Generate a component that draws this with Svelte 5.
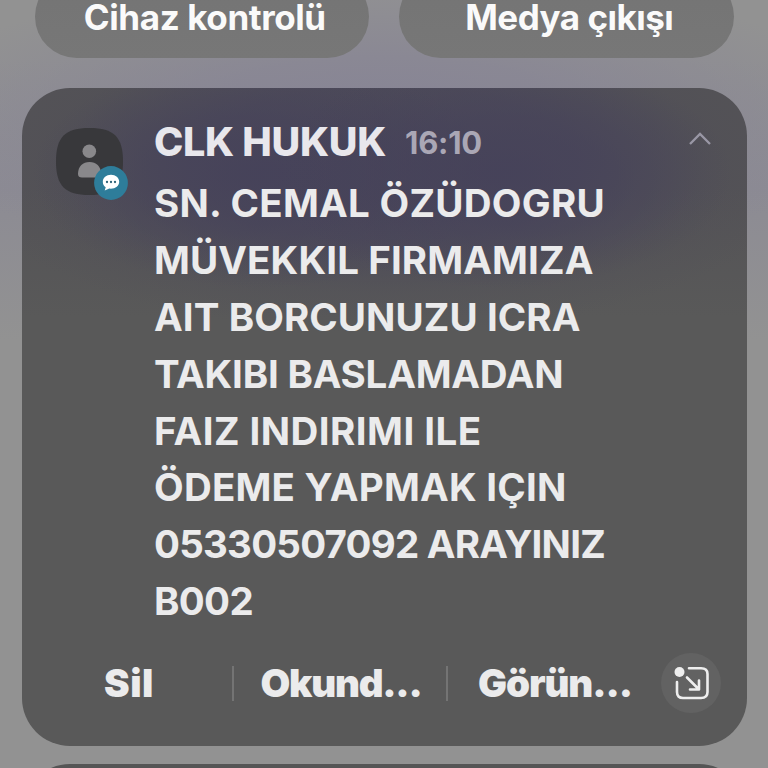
<script>
  const controls = [
    { text: 'Cihaz kontrolü', width: 242 },
    { text: 'Medya çıkışı', width: 208 }
  ];

  const lines = [
    { text: 'SN. CEMAL ÖZÜDOGRU', width: 451 },
    { text: 'MÜVEKKIL FIRMAMIZA', width: 439.5 },
    { text: 'AIT BORCUNUZU ICRA', width: 426.5 },
    { text: 'TAKIBI BASLAMADAN', width: 409.5 },
    { text: 'FAIZ INDIRIMI ILE', width: 327.5 },
    { text: 'ÖDEME YAPMAK IÇIN', width: 412.5 },
    { text: '05330507092 ARAYINIZ', width: 451 },
    { text: 'B002', width: 99 }
  ];

  // Spreads letter spacing so that a label takes up the given width.
  function fit(node, width) {
    const natural = node.getBoundingClientRect().width;
    node.style.letterSpacing = `${(width - natural) / node.textContent.length}px`;
  }
</script>

<div class="shade">
  <div class="controls">
    {#each controls as c}
      <button class="control"><span use:fit={c.width}>{c.text}</span></button>
    {/each}
  </div>

  <article class="card">
    <div class="top">
      <div class="avatar">
        <svg width="67" height="67" viewBox="0 0 67 67">
          <path d="M33.5 0C58 0 67 9 67 33.5S58 67 33.5 67 0 58 0 33.5 9 0 33.5 0Z" fill="#38383b" />
          <circle cx="33.3" cy="23.3" r="6.8" fill="#89888b" />
          <path d="M22 46C22 38 27 34 33.500 34S45 38 45 46C45 48.500 43.500 49.500 41 49.500H26C23.500 49.500 22 48.500 22 46Z" fill="#89888b" />
        </svg>
        <svg class="badge" width="34" height="34" viewBox="0 0 34 34">
          <circle cx="17" cy="17" r="16.900" fill="#2e7d9a" />
          <path d="M17 8.800C12.300 8.800 8.800 11.700 8.800 15.700C8.800 18 9.900 20 11.700 21.200L10.700 24.500L15.300 22.600C21 23.200 25.200 20 25.200 15.700C25.200 11.700 21.700 8.800 17 8.800Z" fill="#fff" />
          <circle cx="13" cy="16" r="1.150" fill="#2e6479" />
          <circle cx="17" cy="16" r="1.150" fill="#2e6479" />
          <circle cx="21" cy="16" r="1.150" fill="#2e6479" />
        </svg>
      </div>
      <div class="content">
        <header>
          <span class="sender" use:fit={232}>CLK HUKUK</span>
          <span class="time" use:fit={77}>16:10</span>
          <svg class="chevron" width="24" height="16" viewBox="0 0 24 16">
            <path d="M2 13L12 3L22 13" fill="none" stroke="#9997a5" stroke-width="2.300" />
          </svg>
        </header>
        <div class="message">
          {#each lines as l}
            <div class="line"><span use:fit={l.width}>{l.text}</span></div>
          {/each}
        </div>
      </div>
    </div>

    <footer>
      <button class="action first"><span use:fit={50}>Sil</span></button>
      <i></i>
      <button class="action second"><span use:fit={161}>Okund...</span></button>
      <i></i>
      <button class="action third"><span use:fit={154}>Görün...</span></button>
      <button class="popup" aria-label="Pop-up">
        <svg width="36" height="36" viewBox="0 0 36 36" fill="none" stroke="#eee" stroke-width="2.600" stroke-linecap="round" stroke-linejoin="round">
          <circle cx="6.500" cy="7" r="5" fill="#eee" stroke="none" />
          <path d="M16 3.300H28C32.500 3.300 34.500 5.300 34.500 9V27C34.500 31 32.500 33 28 33H10C6 33 4 31 4 27V17" />
          <path d="M14 12.500L25.500 24M26 15.500V24.500H17" />
        </svg>
      </button>
    </footer>
  </article>

  <div class="next"></div>
</div>

<style>
  :global(body) { margin: 0; }
  .shade {
    width: 768px;
    height: 768px;
    overflow: hidden;
    display: flex;
    flex-direction: column;
    font-family: Inter, 'Noto Sans', sans-serif;
    background:
      radial-gradient(ellipse 500px 145px at 384px 120px, rgba(133, 130, 150, 0.85) 0%, rgba(134, 131, 149, 0.7) 40%, rgba(145, 145, 146, 0) 100%),
      linear-gradient(180deg, rgba(136, 134, 148, 0) 60px, rgba(136, 134, 148, 0.6) 190px, rgba(136, 134, 148, 0) 340px),
      #929292;
  }
  button { border: 0; padding: 0; margin: 0; font: inherit; color: inherit; background: none; }
  span { white-space: nowrap; }
  .controls {
    flex: none;
    height: 58px;
    box-sizing: border-box;
    padding: 0 34.500px;
    display: flex;
    gap: 30px;
    align-items: flex-end;
    justify-content: center;
  }
  .control {
    flex: 1 1 0;
    min-width: 0;
    box-sizing: border-box;
    height: 83px;
    border-radius: 42px;
    background: linear-gradient(180deg, #747474, #777777);
    color: #fafafa;
    font-size: 35px;
    line-height: 36px;
    font-weight: 700;
    padding-left: 6px;
  }
  .control:last-child { padding-left: 6px; }
  .card {
    flex: none;
    width: 725px;
    height: 658px;
    box-sizing: border-box;
    margin: 30px 0 0 22px;
    padding-top: 25px;
    border-radius: 48px;
    display: flex;
    flex-direction: column;
    justify-content: space-between;
    color: #ebebec;
    background:
      radial-gradient(ellipse 230px 115px at 480px 85px, rgba(68, 64, 90, 0.75) 0%, rgba(69, 65, 90, 0.55) 45%, rgba(80, 78, 88, 0) 100%),
      radial-gradient(ellipse 230px 115px at 240px 85px, rgba(68, 64, 90, 0.75) 0%, rgba(69, 65, 90, 0.55) 45%, rgba(80, 78, 88, 0) 100%),
      radial-gradient(ellipse 430px 170px at 362px 75px, rgba(72, 69, 90, 0.75) 0%, rgba(73, 70, 90, 0.65) 45%, rgba(78, 76, 88, 0.3) 75%, rgba(86, 86, 88, 0) 100%),
      linear-gradient(180deg, #545356 0, #545356 100px, #595959 230px);
  }
  .top { display: flex; padding-left: 34px; }
  .avatar { position: relative; width: 67px; height: 67px; margin-top: 15px; flex: none; }
  .avatar svg { display: block; }
  .avatar .badge { position: absolute; left: 38px; top: 38px; }
  .content { flex: 1; padding-left: 31px; }
  header { display: flex; align-items: baseline; height: 62px; line-height: 58px; }
  .sender { font-size: 39.500px; font-weight: 800; color: #e8e7ec; }
  .time { margin-left: 19px; font-size: 31px; font-weight: 650; color: #aaa7b5; position: relative; top: -2.500px; }
  .chevron { margin-left: auto; margin-right: 35px; align-self: flex-start; margin-top: 18px; }
  .message { font-size: 38.500px; font-weight: 670; }
  .line { height: 56.900px; line-height: 56.900px; }
  footer { display: flex; align-items: center; height: 60px; margin-bottom: 33px; font-size: 38.500px; font-weight: 900; }
  footer i { width: 2px; height: 35px; background: #747474; }
  .first { width: 210px; padding-left: 4px; }
  .second { width: 212px; padding-left: 2px; box-sizing: border-box; }
  .third { width: 213px; padding-left: 1px; box-sizing: border-box; }
  .popup { width: 60px; height: 60px; border-radius: 50%; background: #626262; display: flex; align-items: center; justify-content: center; }
  .next { flex: none; width: 725px; height: 100px; margin: 18px 0 0 22px; border-radius: 48px; background: #555; }
</style>
